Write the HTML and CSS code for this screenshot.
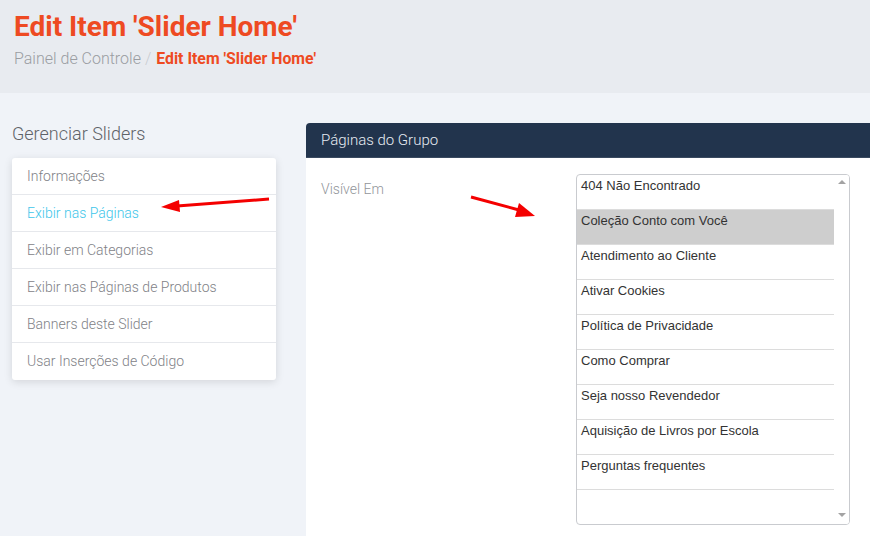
FILE: index.html
```html
<!DOCTYPE html>
<html>
<head>
<meta charset="utf-8">
<link rel="stylesheet" href="styles.css">
</head>
<body>
<header class="page-header">
  <h1 class="title">Edit Item 'Slider Home'</h1>
  <div class="breadcrumb"><span class="crumb">Painel de Controle</span><span class="sep">/</span><span class="current">Edit Item 'Slider Home'</span></div>
</header>
<main class="content">
  <aside class="sidebar">
    <h2 class="side-title">Gerenciar Sliders</h2>
    <ul class="menu">
      <li class="menu-item">Informações</li>
      <li class="menu-item active">Exibir nas Páginas</li>
      <li class="menu-item">Exibir em Categorias</li>
      <li class="menu-item">Exibir nas Páginas de Produtos</li>
      <li class="menu-item">Banners deste Slider</li>
      <li class="menu-item">Usar Inserções de Código</li>
    </ul>
  </aside>
  <section class="panel">
    <div class="panel-head">Páginas do Grupo</div>
    <div class="panel-body">
      <label class="field-label">Visível Em</label>
      <div class="multi">
        <ul class="options">
          <li class="opt">404 Não Encontrado</li>
          <li class="opt selected">Coleção Conto com Você</li>
          <li class="opt">Atendimento ao Cliente</li>
          <li class="opt">Ativar Cookies</li>
          <li class="opt">Política de Privacidade</li>
          <li class="opt">Como Comprar</li>
          <li class="opt">Seja nosso Revendedor</li>
          <li class="opt">Aquisição de Livros por Escola</li>
          <li class="opt">Perguntas frequentes</li>
        </ul>
        <div class="scrollbar">
          <span class="arrow up"></span>
          <span class="arrow down"></span>
        </div>
      </div>
    </div>
  </section>
</main>
<svg class="red-arrow arrow-left" width="120" height="20" viewBox="0 0 120 20">
  <line x1="112" y1="4" x2="20" y2="11" stroke="#f40000" stroke-width="3"/>
  <polygon points="4,12 22,5 23,17" fill="#f40000"/>
</svg>
<svg class="red-arrow arrow-right" width="80" height="30" viewBox="0 0 80 30">
  <line x1="4" y1="4" x2="52" y2="17" stroke="#f40000" stroke-width="3"/>
  <polygon points="68,23 48,24 52,10" fill="#f40000"/>
</svg>
</body>
</html>
```
FILE: styles.css
```css
* { box-sizing: border-box; }
html, body { margin: 0; padding: 0; }
body {
  width: 870px;
  height: 536px;
  overflow: hidden;
  background: #f0f3f8;
  font-family: Roboto, "Liberation Sans", sans-serif;
  position: relative;
}
.page-header {
  background: #e8ebf0;
  height: 93px;
  padding: 10px 14px 0;
}
.title {
  margin: 0;
  font-size: 28px;
  line-height: 34px;
  font-weight: 700;
  color: #ee4a22;
}
.breadcrumb {
  margin-top: 5px;
  font-size: 16px;
  line-height: 20px;
  color: #9a9da2;
}
.crumb { font-weight: 300; }
.sep { color: #c8cbd0; margin: 0 5px 0 4px; font-weight: 300; }
.current { color: #ee4a22; font-weight: 700; font-size: 15.8px; }
.content {
  display: flex;
  align-items: flex-start;
  padding: 30px 0 0 12px;
  gap: 30px;
}
.sidebar { width: 264px; flex: none; }
.side-title {
  margin: 0;
  font-size: 18px;
  line-height: 22px;
  font-weight: 300;
  color: #5f6368;
}
.menu {
  list-style: none;
  margin: 13px 0 0;
  padding: 0;
  background: #fff;
  border-radius: 3px;
  box-shadow: 0 2px 8px rgba(0,0,0,0.12);
}
.menu-item {
  height: 37px;
  padding: 0 15px;
  line-height: 37px;
  font-size: 14px;
  font-weight: 300;
  color: #7f8287;
  border-bottom: 1px solid #e6e8ec;
}
.menu-item:last-child { border-bottom: none; }
.menu-item.active { color: #3ec6ea; }
.panel {
  flex: 1;
  min-width: 600px;
  background: #fff;
  height: 420px;
  border-radius: 4px 0 0 0;
  overflow: hidden;
}
.panel-head {
  background: #22344d;
  color: #e6ebf2;
  height: 35px;
  line-height: 34px;
  padding: 0 15px;
  font-size: 15px;
  font-weight: 300;
  border-bottom: 1px solid #3a4a60;
}
.panel-body {
  display: flex;
  padding: 16px 0 0 15px;
}
.field-label {
  width: 255px;
  flex: none;
  font-size: 14px;
  font-weight: 300;
  color: #92959a;
  padding-top: 7px;
}
.multi {
  width: 274px;
  height: 351px;
  border: 1px solid #c9cbcf;
  border-radius: 4px;
  display: flex;
  overflow: hidden;
}
.options {
  list-style: none;
  margin: 0;
  padding: 0;
  flex: 1;
  font-family: "Liberation Sans", Arial, sans-serif;
  font-size: 13px;
  color: #333;
}
.opt {
  height: 35px;
  padding: 3px 4px 0;
  line-height: 15px;
  border-bottom: 1px solid #dcdcdc;
}
.opt.selected { background: #cecece; }
.scrollbar {
  width: 15px;
  flex: none;
  position: relative;
  background: #fff;
}
.arrow {
  position: absolute;
  left: 4px;
  width: 0; height: 0;
  border-left: 4px solid transparent;
  border-right: 4px solid transparent;
}
.arrow.up { top: 5px; border-bottom: 4px solid #a3a3a3; }
.arrow.down { bottom: 7px; border-top: 4px solid #a3a3a3; }
.red-arrow { position: absolute; }
.arrow-left { left: 157px; top: 195px; }
.arrow-right { left: 467px; top: 193px; }
```
